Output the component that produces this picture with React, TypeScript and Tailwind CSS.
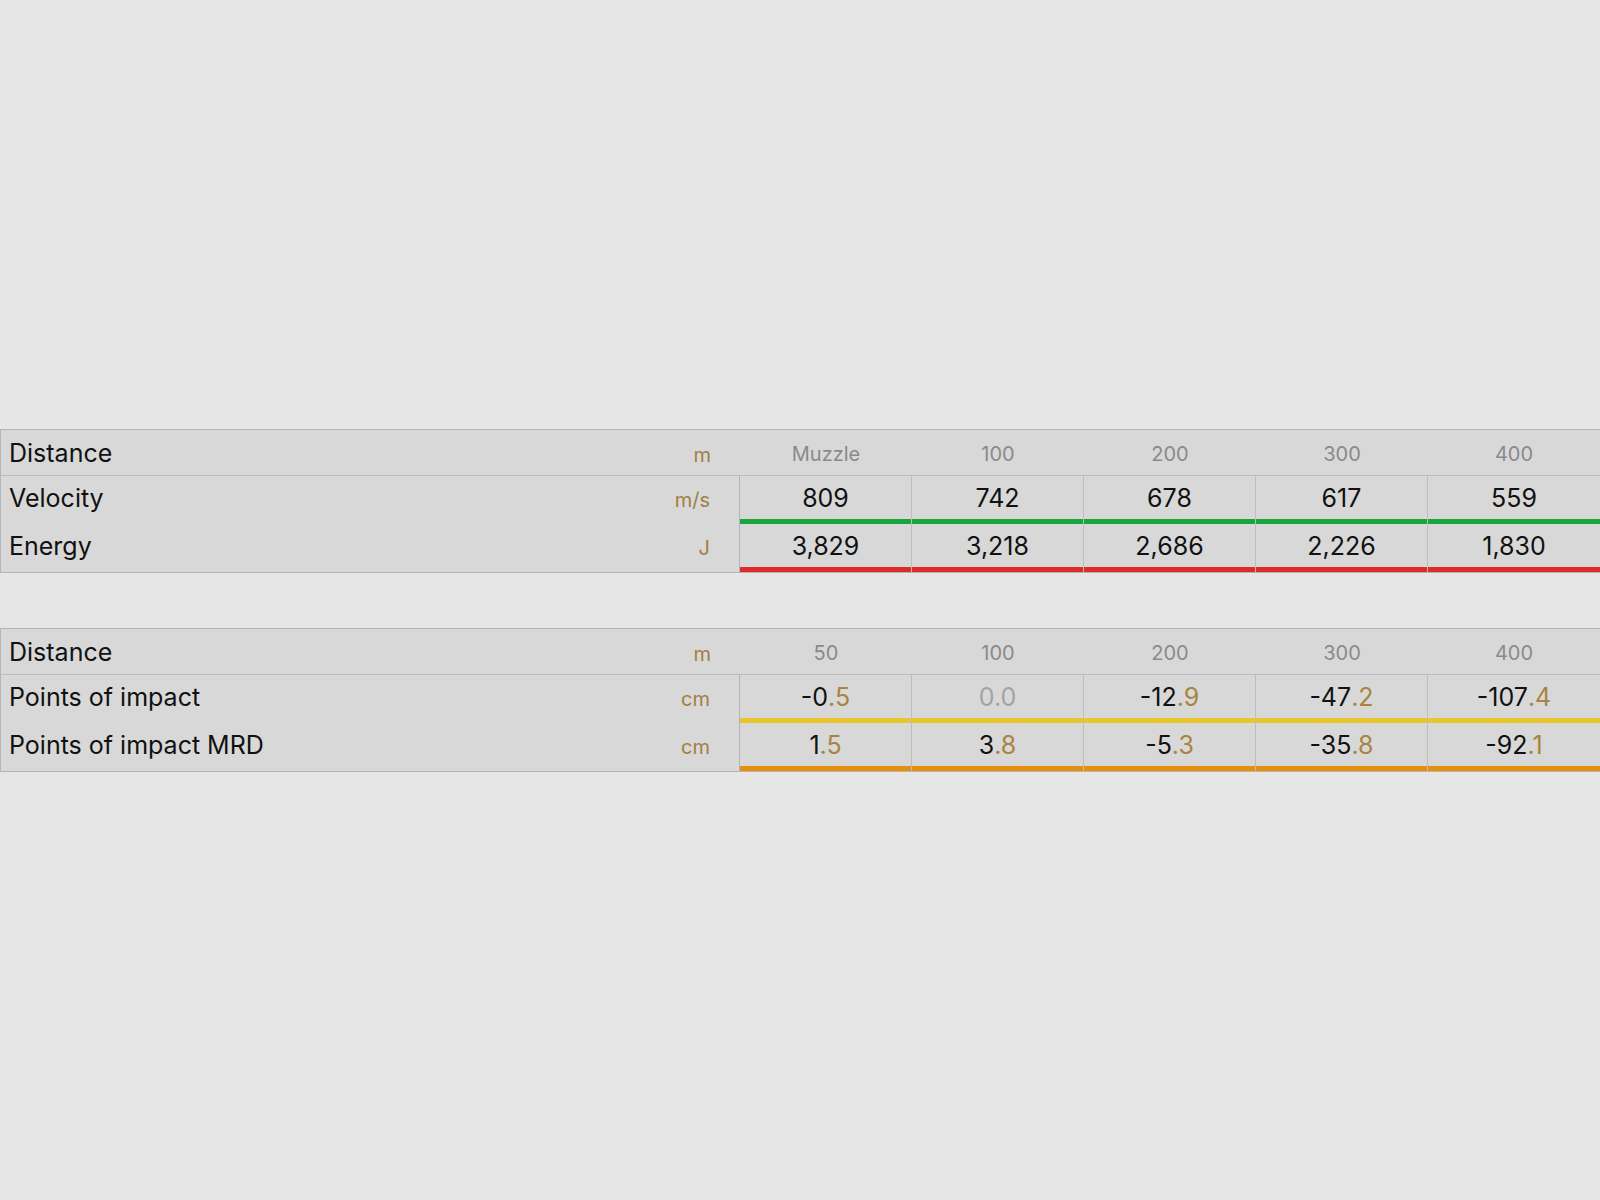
import React from 'react';

type Cell = { whole: string; frac?: string; muted?: boolean };

interface Row {
  label: string;
  unit: string;
  bar: string;
  cells: Cell[];
}

interface Block {
  distances: string[];
  rows: Row[];
}

const BLOCKS: Block[] = [
  {
    distances: ['Muzzle', '100', '200', '300', '400'],
    rows: [
      {
        label: 'Velocity',
        unit: 'm/s',
        bar: 'bg-[#1aa63a]',
        cells: [{ whole: '809' }, { whole: '742' }, { whole: '678' }, { whole: '617' }, { whole: '559' }],
      },
      {
        label: 'Energy',
        unit: 'J',
        bar: 'bg-[#e02a2a]',
        cells: [{ whole: '3,829' }, { whole: '3,218' }, { whole: '2,686' }, { whole: '2,226' }, { whole: '1,830' }],
      },
    ],
  },
  {
    distances: ['50', '100', '200', '300', '400'],
    rows: [
      {
        label: 'Points of impact',
        unit: 'cm',
        bar: 'bg-[#e8c52a]',
        cells: [
          { whole: '-0', frac: '.5' },
          { whole: '0.0', muted: true },
          { whole: '-12', frac: '.9' },
          { whole: '-47', frac: '.2' },
          { whole: '-107', frac: '.4' },
        ],
      },
      {
        label: 'Points of impact MRD',
        unit: 'cm',
        bar: 'bg-[#e58f0c]',
        cells: [
          { whole: '1', frac: '.5' },
          { whole: '3', frac: '.8' },
          { whole: '-5', frac: '.3' },
          { whole: '-35', frac: '.8' },
          { whole: '-92', frac: '.1' },
        ],
      },
    ],
  },
];

const font = { fontFamily: 'Inter, "Liberation Sans", sans-serif' };

const Table: React.FC<{ block: Block }> = ({ block }) => (
  <div className="border-y border-[#b5b5b5] bg-[#d8d8d8]">
    {/* header row */}
    <div className="flex h-[46px] border-b border-[#bcbcbc]">
      <div className="flex w-[740px] items-baseline justify-between border-l border-[#b5b5b5] pl-2 pr-[29px] pt-[5px]">
        <span className="text-[25px] text-[#111]">Distance</span>
        <span className="text-[20px] text-[#a17f42]">m</span>
      </div>
      {block.distances.map((d) => (
        <div key={d} className="flex w-[172px] items-baseline justify-center pt-[9px] text-[20px] text-[#8a8a8a]">
          {d}
        </div>
      ))}
    </div>

    {block.rows.map((row) => (
      <div key={row.label} className="flex h-[48px]">
        <div className="flex w-[740px] items-baseline justify-between border-x border-[#b5b5b5] pl-2 pr-[29px] pt-[4px]">
          <span className="text-[25px] text-[#111]">{row.label}</span>
          <span className="text-[20px] text-[#a17f42]">{row.unit}</span>
        </div>
        {row.cells.map((c, i) => (
          <div
            key={i}
            className={`flex w-[172px] flex-col ${i < row.cells.length - 1 ? 'border-r border-[#bdbdbd]' : ''}`}
          >
            <div className="flex flex-1 items-center justify-center pt-[2px] text-[25px]">
              <span className={c.muted ? 'text-[#a3a3a3]' : 'text-[#111]'}>{c.whole}</span>
              {c.frac && <span className="text-[#a8843e]">{c.frac}</span>}
            </div>
            <div className={`h-[5px] ${row.bar}`} />
          </div>
        ))}
      </div>
    ))}
  </div>
);

export default function App() {
  return (
    <div className="min-h-[1200px] w-[1600px] overflow-hidden bg-[#e6e6e6] pt-[429px]" style={font}>
      <Table block={BLOCKS[0]} />
      <div className="mt-[55px]">
        <Table block={BLOCKS[1]} />
      </div>
    </div>
  );
}
